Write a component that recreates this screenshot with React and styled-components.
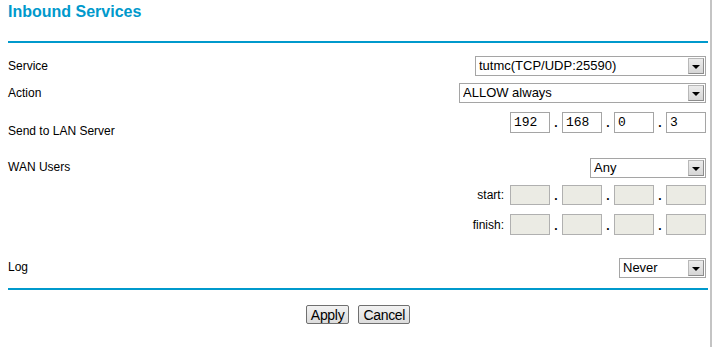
import React from 'react';
import styled, { createGlobalStyle } from 'styled-components';

const GlobalStyle = createGlobalStyle`
  html, body {
    margin: 0;
    padding: 0;
    background: #fff;
  }
  body {
    font-family: 'Liberation Sans', Arial, sans-serif;
    color: #000;
  }
`;

const Frame = styled.div`
  width: 710px;
  height: 347px;
  border-right: 2px solid #c4c4c4;
  box-sizing: content-box;
  overflow: hidden;
`;

const Page = styled.div`
  width: 700px;
  padding: 0 0 0 8px;
`;

const Title = styled.h1`
  margin: 0;
  padding-top: 3px;
  height: 41px;
  box-sizing: border-box;
  font: bold 16px/18px 'Liberation Sans', Arial, sans-serif;
  color: #0099cc;
`;

const Rule = styled.div`
  height: 2px;
  background: #0099cc;
`;

const Body = styled.div`
  padding-top: 7px;
`;

const Row = styled.div`
  display: flex;
  justify-content: space-between;
  align-items: flex-start;
  height: ${(p) => p.$h}px;
  padding-right: 2px;
`;

const Label = styled.div`
  font-size: 12px;
  line-height: 14px;
  padding-top: ${(p) => p.$top}px;
  white-space: nowrap;
`;

const Controls = styled.div`
  display: flex;
  align-items: flex-end;
  margin-top: ${(p) => p.$top}px;
`;

const SelectBox = styled.div`
  display: flex;
  align-items: center;
  width: ${(p) => p.$w}px;
  height: 20px;
  box-sizing: border-box;
  border: 1px solid #a5a5a5;
  padding: 1px;
  background: #fff;
`;

const NativeSelect = styled.select`
  flex: 1;
  min-width: 0;
  height: 16px;
  border: 0;
  padding: 0 0 0 2px;
  margin: 0;
  appearance: none;
  background: transparent;
  font: 13px/16px 'Liberation Sans', Arial, sans-serif;
  color: #000;
  outline: none;
`;

const ArrowBox = styled.span`
  display: flex;
  align-items: center;
  justify-content: center;
  width: 16px;
  height: 16px;
  box-sizing: border-box;
  border: 1px solid #8c8c8c;
  border-top-color: #b8b8b8;
  border-left-color: #b8b8b8;
  background: linear-gradient(#ececec, #d6d6d6);

  &::after {
    content: '';
    border-left: 4px solid transparent;
    border-right: 4px solid transparent;
    border-top: 4px solid #000;
    margin-top: 1px;
  }
`;

const Octet = styled.input`
  width: 40px;
  height: ${(p) => p.$h}px;
  box-sizing: border-box;
  border: 1px solid ${(p) => (p.disabled ? '#b0b0b0' : '#a5a5a5')};
  background: ${(p) => (p.disabled ? '#ebebe4' : '#fff')};
  padding: 0 0 0 3px;
  margin: 0;
  font: 13px 'Liberation Mono', 'Courier New', monospace;
  color: #000;
  outline: none;
`;

const Dot = styled.span`
  width: 12px;
  text-align: center;
  font: bold 12px/14px 'Liberation Sans', Arial, sans-serif;
  padding-bottom: ${(p) => p.$pb}px;
`;

const SideLabel = styled.span`
  font-size: 12px;
  line-height: 14px;
  margin-right: 6px;
  align-self: center;
`;

const Footer = styled.div`
  display: flex;
  justify-content: center;
  gap: 9px;
  padding: 15px 0 0 0;
`;

const Button = styled.button`
  height: 19px;
  padding: 0 4px;
  border: 1px solid #707070;
  border-radius: 2px;
  background: linear-gradient(#f2f2f2, #dcdcdc);
  font: 14px/16px 'Liberation Sans', Arial, sans-serif;
  color: #000;
  letter-spacing: -0.3px;
`;

const Select = ({ width, value }) => (
  <SelectBox $w={width}>
    <NativeSelect defaultValue={value}>
      <option>{value}</option>
    </NativeSelect>
    <ArrowBox />
  </SelectBox>
);

const IpFields = ({ values, disabled, height, dotPad }) => (
  <>
    {values.map((v, i) => (
      <React.Fragment key={i}>
        {i > 0 && <Dot $pb={dotPad}>.</Dot>}
        <Octet $h={height} disabled={disabled} defaultValue={v} />
      </React.Fragment>
    ))}
  </>
);

export default function App() {
  return (
    <Frame>
      <GlobalStyle />
      <Page>
        <Title>Inbound Services</Title>
        <Rule />
        <Body>
          <Row $h={30}>
            <Label $top={9}>Service</Label>
            <Controls $top={6}>
              <Select width={231} value="tutmc(TCP/UDP:25590)" />
            </Controls>
          </Row>
          <Row $h={28}>
            <Label $top={6}>Action</Label>
            <Controls $top={3}>
              <Select width={247} value="ALLOW always" />
            </Controls>
          </Row>
          <Row $h={40}>
            <Label $top={16}>Send to LAN Server</Label>
            <Controls $top={4}>
              <IpFields values={['192', '168', '0', '3']} height={21} dotPad={3} />
            </Controls>
          </Row>
          <Row $h={32}>
            <Label $top={12}>WAN Users</Label>
            <Controls $top={10}>
              <Select width={116} value="Any" />
            </Controls>
          </Row>
          <Row $h={30}>
            <span />
            <Controls $top={5}>
              <SideLabel>start:</SideLabel>
              <IpFields values={['', '', '', '']} disabled height={20} dotPad={2} />
            </Controls>
          </Row>
          <Row $h={30}>
            <span />
            <Controls $top={4}>
              <SideLabel>finish:</SideLabel>
              <IpFields values={['', '', '', '']} disabled height={21} dotPad={2} />
            </Controls>
          </Row>
          <Row $h={48}>
            <Label $top={20}>Log</Label>
            <Controls $top={18}>
              <Select width={87} value="Never" />
            </Controls>
          </Row>
        </Body>
        <Rule />
        <Footer>
          <Button>Apply</Button>
          <Button>Cancel</Button>
        </Footer>
      </Page>
    </Frame>
  );
}
